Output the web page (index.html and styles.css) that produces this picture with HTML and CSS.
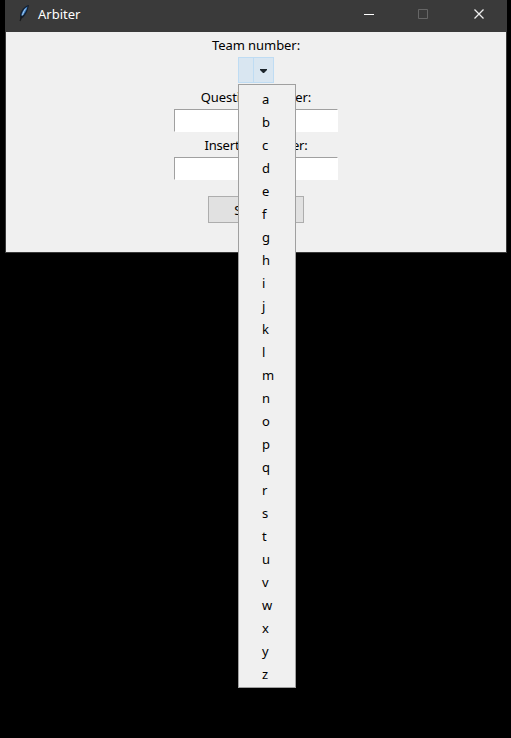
FILE: index.html
```html
<!DOCTYPE html>
<html lang="en">
<head>
<meta charset="utf-8">
<title>Arbiter</title>
<link rel="stylesheet" href="styles.css">
</head>
<body>
<main class="window">
  <header class="titlebar">
    <svg class="feather" width="12" height="18" viewBox="0 0 12 18">
      <path d="M11 0C7.500 0.500 2.500 5 2 10L2 14L4.500 13C8 10.500 10 5 11 0Z" fill="#142030"/>
      <path d="M9.500 1.500C6.500 3 3.500 7 3.200 11.500C6.500 9.500 8.700 5.500 9.500 1.500Z" fill="#3f7fc6"/>
      <path d="M7.800 3.500C6 5.500 5 8 4.500 10.500" stroke="#a9d0f0" fill="none"/>
      <path d="M4.200 10.500L2 16" stroke="#18191b" stroke-width="1.200" fill="none"/>
    </svg>
    <h1 class="title">Arbiter</h1>
    <svg class="controls" width="138" height="32" viewBox="0 0 138 32" fill="none">
      <path d="M-5 14.500h10" stroke="#fff"/>
      <path d="M49.500 9.500h9v9h-9z" stroke="#666"/>
      <path d="M105.500 9.500l9 9M114.500 9.500l-9 9" stroke="#eee" stroke-width="1.300"/>
    </svg>
  </header>
  <form class="form">
    <label class="label">Team number:</label>
    <div class="select"><span class="value"></span><span class="arrow"><svg width="9" height="5" viewBox="0 0 9 5"><path d="M1 0h7v1L5 4H4L1 1z" fill="#1c252c"/></svg></span>
      <ul class="menu">
        <li>a</li><li>b</li><li>c</li><li>d</li><li>e</li><li>f</li><li>g</li><li>h</li><li>i</li><li>j</li><li>k</li><li>l</li><li>m</li><li>n</li><li>o</li><li>p</li><li>q</li><li>r</li><li>s</li><li>t</li><li>u</li><li>v</li><li>w</li><li>x</li><li>y</li><li>z</li>
      </ul>
    </div>
    <label class="label">Question number:</label>
    <div class="entry"></div>
    <label class="label insert">Insert an answer:</label>
    <div class="entry"></div>
    <button class="submit" type="button">Submit</button>
  </form>
</main>
</body>
</html>
```

FILE: styles.css
```css
* { box-sizing: border-box; }
body {
  margin: 0;
  height: 738px;
  background: #000;
  font: 13px/24px "Noto Sans", "Open Sans", sans-serif;
  color: #000;
}
.window {
  width: 502px;
  height: 253px;
  margin-left: 5px;
  border: solid #3a3a3a;
  border-width: 0 1px 1px;
  background: #f0f0f0;
}
.titlebar {
  display: flex;
  height: 32px;
  padding: 0 0 0 12px;
  background: #3a3a3a;
  color: #fff;
}
.feather { margin-top: 5px; }
.title {
  margin: 2px auto 0 8px;
  font-size: 13px;
  font-weight: 400;
}
.controls { overflow: visible; margin-right: -1px; }
.form {
  display: flex;
  flex-direction: column;
  align-items: center;
  height: 220px;
  padding-top: 1px;
}
.label { height: 24px; white-space: nowrap; letter-spacing: -0.06px; }
.insert { letter-spacing: -0.17px; }
.select {
  position: relative;
  display: flex;
  width: 36px;
  height: 26px;
  margin-bottom: 2px;
  border: 1px solid #bfdcf3;
  background: #d9e6f1;
}
.value { width: 15px; border-right: 1px solid #bfdcf3; }
.arrow { display: flex; flex: 1; align-items: center; justify-content: center; padding-top: 2px; }
.menu {
  position: absolute;
  z-index: 1;
  top: 26px;
  left: -1px;
  width: 58px;
  height: 604px;
  margin: 0;
  padding: 3px 0 1px 23px;
  list-style: none;
  border: 1px solid #a0a0a0;
  background: #f0f0f0;
  line-height: 23px;
}
.entry {
  width: 164px;
  height: 23px;
  margin-bottom: 1px;
  border: 1px solid #fff;
  border-top-color: #a0a0a0;
  border-left-color: #a0a0a0;
  background: #fff;
}
.submit {
  width: 96px;
  height: 27px;
  margin: 15px 0 0;
  padding: 0;
  border: 1px solid #adadad;
  background: #e1e1e1;
  color: #000;
  font: inherit;
}
```
